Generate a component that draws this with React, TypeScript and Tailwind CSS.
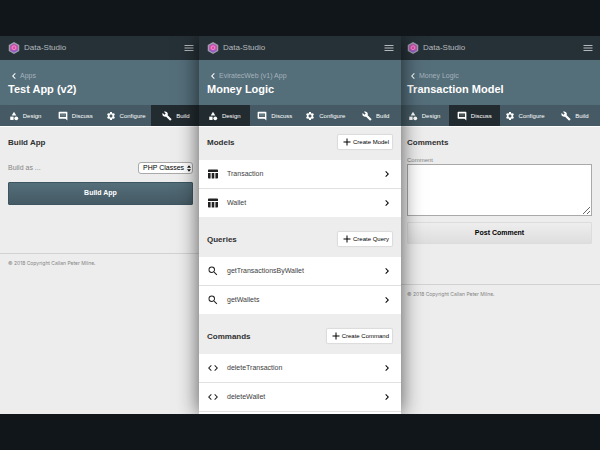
import React from "react";
import type { IconType } from "react-icons";
import {
  MdAdd, MdBuild, MdCategory, MdChevronLeft, MdChevronRight, MdCode,
  MdMenu, MdSearch, MdSettings,
} from "react-icons/md";

type Icon = IconType | ((props: { className?: string }) => React.ReactElement);

function DiscussIcon({ className }: { className?: string }) {
  return (
    <svg viewBox="0 0 24 24" className={className} fill="currentColor" aria-hidden="true">
      <path fillRule="evenodd" d="M3 2h18a1.500 1.500 0 0 1 1.500 1.500V23l-4.500-4.500H3A1.500 1.500 0 0 1 1.500 17V3.500A1.500 1.500 0 0 1 3 2Zm2 4v8.500h14V6Z" />
      <path d="M6.500 7.500h11V9h-11Zm0 3.500h11v1.500h-11Z" opacity=".4" />
    </svg>
  );
}

function TableIcon({ className }: { className?: string }) {
  return (
    <svg viewBox="0 0 24 24" className={className} fill="currentColor" aria-hidden="true">
      <path d="M2 4.500A1.500 1.500 0 0 1 3.500 3h17A1.500 1.500 0 0 1 22 4.500V8H2ZM2 10h5.200v11H3.500A1.500 1.500 0 0 1 2 19.500ZM9.400 10h5.200v11H9.400ZM16.800 10H22v9.500a1.500 1.500 0 0 1-1.500 1.500h-3.700Z" />
    </svg>
  );
}

const tabs: { name: string; icon: Icon }[] = [
  { name: "Design", icon: MdCategory },
  { name: "Discuss", icon: DiscussIcon },
  { name: "Configure", icon: MdSettings },
  { name: "Build", icon: MdBuild },
];

const sections: { title: string; action: string; icon: Icon; rows: string[] }[] = [
  { title: "Models", action: "Create Model", icon: TableIcon, rows: ["Transaction", "Wallet"] },
  { title: "Queries", action: "Create Query", icon: MdSearch, rows: ["getTransactionsByWallet", "getWallets"] },
  { title: "Commands", action: "Create Command", icon: MdCode, rows: ["deleteTransaction", "deleteWallet"] },
];

function Logo() {
  return (
    <svg viewBox="0 0 24 24" className="size-3" aria-hidden="true">
      <path d="M12 0 22.500 6v12L12 24 1.500 18V6Z" fill="#9f9fac" />
      <path d="M12 3 19.800 7.500v9L12 21l-7.800-4.500v-9Z" fill="#b653b4" />
      <path d="M4.200 16.500 12 12l7.800 4.500L12 21Z" fill="#8f62c8" />
      <circle cx="12" cy="11.500" r="5.500" fill="#dc4aa6" />
      <path d="M12 7.500 15.500 9.500v4L12 15.500l-3.500-2v-4Z" fill="none" stroke="#efa8d8" strokeWidth="1.500" />
    </svg>
  );
}

function Screen({ crumb, title, active, className, children }: {
  crumb: string; title: string; active: string; className: string; children: React.ReactNode;
}) {
  return (
    <section className={`flex min-w-0 flex-col bg-[#ededed] ${className}`}>
      <header className="flex h-6 shrink-0 items-center justify-between bg-[#263137] px-2 text-[#b4babd]">
        <div className="flex items-center gap-1">
          <Logo />
          <span className="text-[8px] leading-3 font-light">Data-Studio</span>
        </div>
        <button type="button" aria-label="Menu" className="-mr-0.5"><MdMenu className="size-3" /></button>
      </header>
      <div className="shrink-0 bg-[#546e7a] px-2 pt-2.5 pb-2">
        <a href="#" className="flex items-center text-[7px] leading-3 font-light text-[#a5b3ba]">
          <MdChevronLeft className="size-3 text-white" />
          {crumb}
        </a>
        <h1 className="text-[11px] leading-[15px] font-bold text-white">{title}</h1>
      </div>
      <nav className="grid h-[21px] shrink-0 grid-cols-4 bg-[#455a64] shadow-[0_1px_0_#ffffff]">
        {tabs.map(({ name, icon: TabIcon }) => (
          <a key={name} href="#" className={`flex items-center justify-center gap-1 text-[6px] leading-2 text-white ${name === active ? "bg-[#222b30]" : ""}`}>
            <TabIcon className="size-2.5" />
            {name}
          </a>
        ))}
      </nav>
      {children}
    </section>
  );
}

function Heading({ children }: { children: React.ReactNode }) {
  return <h2 className="text-[8px] leading-3 font-bold text-[#303030]">{children}</h2>;
}

function Footer() {
  return (
    <footer className="border-t border-[#d2d2d2] px-2 pt-[5px] font-[Inter,sans-serif] text-[5px] leading-2 text-[#858585]">
      © 2018 Copyright Callan Peter Milne.
    </footer>
  );
}

export default function App() {
  return (
    <main className="flex h-screen flex-col bg-[#101619] py-9 font-['Liberation_Sans',Arial,sans-serif]">
      <div className="grid min-h-0 flex-1 grid-cols-3 overflow-hidden">
        <Screen crumb="Apps" title="Test App (v2)" active="Build" className="-mr-px">
          <div className="flex h-[127px] flex-col px-2 pt-[11px]">
            <Heading>Build App</Heading>
            <div className="mt-[13px] flex items-center justify-between">
              <label htmlFor="target" className="text-[7px] leading-3 font-light text-[#858585]">Build as ...</label>
              <div className="relative">
                <select id="target" className="block h-3 w-[55px] appearance-none rounded-[3px] border border-[#a9a9a9] bg-white pl-1 text-[7px] leading-[10px] text-black">
                  <option>PHP Classes</option>
                </select>
                <svg viewBox="0 0 6 10" className="pointer-events-none absolute top-[3px] right-[2px] h-[7px] w-1" aria-hidden="true">
                  <path d="M0 4 3 0l3 4ZM0 6l3 4 3-4Z" fill="#111" />
                </svg>
              </div>
            </div>
            <button type="button" className="mt-2 h-[23px] rounded-[1px] border border-[#3d5561] bg-linear-to-b from-[#546e7a] to-[#455a64] text-[7px] font-bold text-white">Build App</button>
          </div>
          <Footer />
        </Screen>

        <Screen crumb="EviratecWeb (v1) App" title="Money Logic" active="Design" className="z-10 -mx-px shadow-[0_0_20px_rgba(0,0,0,0.65)]">
          {sections.map(({ title, action, icon: RowIcon, rows }) => (
            <div key={title} className="group shrink-0">
              <div className="flex items-end justify-between pt-[15px] pr-[9px] pb-[11px] pl-2 group-[:nth-of-type(2)]:pt-[9px]">
                <Heading>{title}</Heading>
                <button type="button" className="flex h-[14px] items-center rounded-[1px] bg-white px-[3px] text-[6px] leading-2 text-black shadow-[0_0_1px_1px_rgba(0,0,0,0.08)]">
                  <MdAdd className="size-3" />
                  {action}
                </button>
              </div>
              <ul className="divide-y divide-[#e0e0e0] bg-white">
                {rows.map((row) => (
                  <li key={row}>
                    <a href="#" className="flex h-7 items-center px-2 text-[7px] leading-3 text-[#404040]">
                      <RowIcon className="mr-2 size-3 text-[#222]" />
                      {row}
                      <MdChevronRight className="ml-auto size-3 text-black" />
                    </a>
                  </li>
                ))}
              </ul>
            </div>
          ))}
          <div className="flex-1 border-t border-[#e0e0e0] bg-white" />
        </Screen>

        <Screen crumb="Money Logic" title="Transaction Model" active="Discuss" className="-ml-px">
          <div className="flex h-[158px] flex-col px-2 pt-[11px]">
            <Heading>Comments</Heading>
            <label htmlFor="comment" className="mt-2 text-[6px] leading-[7px] text-[#858585]">Comment</label>
            <textarea id="comment" className="h-[52px] border border-[#a9a9a9] bg-white p-1 text-[7px]" />
            <button type="button" className="mt-1.5 h-[22px] rounded-[1px] border border-[#dcdcdc] bg-linear-to-b from-[#eeeeee] to-[#dedede] text-[7px] font-bold text-black">Post Comment</button>
          </div>
          <Footer />
        </Screen>
      </div>
    </main>
  );
}
